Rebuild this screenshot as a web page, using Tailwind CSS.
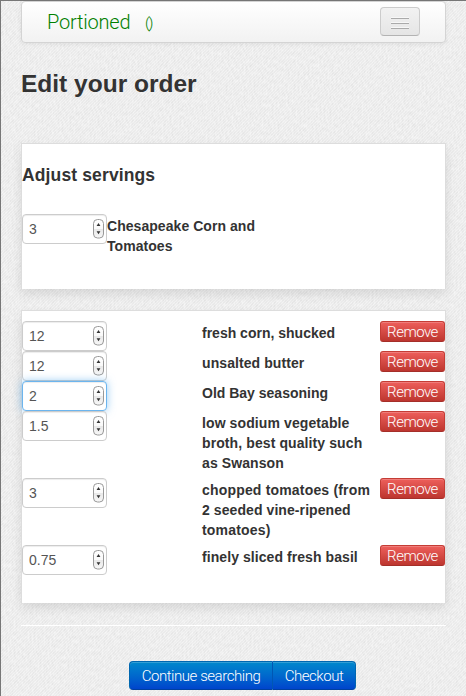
<!DOCTYPE html>
<html lang="en">
<head>
<meta charset="utf-8">
<title>Portioned</title>
<script src="https://cdn.jsdelivr.net/npm/@tailwindcss/browser@4"></script>
</head>
<body class="relative h-[696px] w-[466px] overflow-hidden bg-[#ededed] font-['Liberation_Sans',Arial,sans-serif] text-[14px] leading-[20px] text-[#333]">
<!-- linen background -->
<svg class="absolute inset-0 -z-0" width="466" height="696" aria-hidden="true">
  <filter id="linen" x="0" y="0" width="100%" height="100%" color-interpolation-filters="sRGB">
    <feTurbulence type="fractalNoise" baseFrequency="0.5 0.25" numOctaves="3" seed="4" stitchTiles="stitch"/>
    <feColorMatrix values="0.09 0 0 0 0.878  0.09 0 0 0 0.878  0.09 0 0 0 0.878  0 0 0 0 1"/>
  </filter>
  <pattern id="twill" width="3" height="3" patternUnits="userSpaceOnUse"><path d="M0 3L3 0" stroke="#fff" stroke-opacity=".4" stroke-width=".9"/></pattern>
  <rect width="466" height="696" filter="url(#linen)"/>
  <rect width="466" height="696" fill="url(#twill)"/>
</svg>
<svg width="0" height="0" class="absolute">
  <defs>
    <linearGradient id="sg" x1="0" y1="0" x2="0" y2="1"><stop offset="0" stop-color="#fff"/><stop offset=".5" stop-color="#fafafa"/><stop offset=".52" stop-color="#e8e8e8"/><stop offset="1" stop-color="#f8f8f8"/></linearGradient>
    <symbol id="spin" viewBox="0 0 11 20"><rect x=".5" y=".5" width="10" height="18.5" rx="4" fill="url(#sg)" stroke="#999"/><path d="M5.5 4L7.4 7H3.6ZM5.5 15.3L7.4 12.3H3.6Z" fill="#333"/></symbol>
  </defs>
</svg>
<div class="relative h-full border-t border-l border-[#777] pl-[20px]">
  <nav class="flex h-[42px] w-[425px] items-start justify-between rounded-[4px] border border-[#d4d4d4] bg-linear-to-b from-white to-[#f2f2f2] pr-[25px] pl-[25px] shadow-[0_1px_4px_rgba(0,0,0,0.065)]">
    <div class="flex pt-[9px] font-[Roboto] font-light text-[#008000]">
      <span class="w-[98px] pt-px text-[20px] tracking-[-0.2px] whitespace-nowrap">Portioned</span>
      <span class="pt-[2px] text-[15px] tracking-[-1.3px]">()</span>
    </div>
    <button class="mt-[5px] flex h-[29px] w-[40px] flex-col items-center gap-[3px] rounded-[4px] border border-[#ccc] border-b-[#b3b3b3] bg-linear-to-b from-[#f2f2f2] to-[#e5e5e5] pt-[9px] shadow-[inset_0_1px_0_rgba(255,255,255,0.1),0_1px_0_rgba(255,255,255,0.08)]" aria-label="Menu">
      <span class="h-[2px] w-[18px] border-b border-[#aaa] bg-[#f7f7f7]"></span>
      <span class="h-[2px] w-[18px] border-b border-[#aaa] bg-[#f7f7f7]"></span>
      <span class="h-[2px] w-[18px] border-b border-[#aaa] bg-[#f7f7f7]"></span>
    </button>
  </nav>
  <h2 class="mt-[21px] h-[79px] text-[24.5px] leading-[40px] font-bold whitespace-nowrap">Edit your order</h2>

  <section class="h-[146px] w-[425px] border border-b-0 border-[#ddd] bg-white shadow-[0_5px_10px_rgba(0,0,0,0.1)]">
    <h4 class="h-[70px] pt-[21px] text-[17.5px] font-bold tracking-[0.13px] whitespace-nowrap">Adjust servings</h4>
    <div class="flex">
      <div class="flex h-[30px] w-[85px] items-center justify-between rounded-[4px] border border-[#ccc] bg-white pr-[2px] pl-[6px] text-[#555] shadow-[inset_0_1px_1px_rgba(0,0,0,0.075)]"><span>3</span><svg class="h-[20px] w-[11px]"><use href="#spin"/></svg></div>
      <div class="pt-[2px] font-bold tracking-[0.05px] whitespace-nowrap">Chesapeake Corn and<br>Tomatoes</div>
    </div>
  </section>

  <section class="mt-[21px] h-[293px] w-[425px] border border-b-0 border-[#ddd] bg-white pt-[10px] shadow-[0_5px_10px_rgba(0,0,0,0.1)]">
    <div class="flex h-[30px] items-start">
      <div class="flex h-[30px] w-[85px] items-center justify-between rounded-[4px] border border-[#ccc] bg-white pr-[2px] pl-[6px] text-[#555] shadow-[inset_0_1px_1px_rgba(0,0,0,0.075)]"><span>12</span><svg class="h-[20px] w-[11px]"><use href="#spin"/></svg></div>
      <div class="ml-[95px] w-[178px] pt-[2px] font-bold whitespace-nowrap">fresh corn, shucked</div>
      <button class="h-[21px] w-[65px] rounded-[3px] border border-[#c43c35] border-b-[#a52f29] bg-linear-to-b from-[#ee5f5b] to-[#bd362f] pt-px font-[Roboto] text-[15px] leading-[18px] font-light tracking-[-0.5px] text-white shadow-[inset_0_1px_0_rgba(255,255,255,0.2)]">Remove</button>
    </div>
    <div class="flex h-[30px] items-start">
      <div class="flex h-[30px] w-[85px] items-center justify-between rounded-[4px] border border-[#ccc] bg-white pr-[2px] pl-[6px] text-[#555] shadow-[inset_0_1px_1px_rgba(0,0,0,0.075)]"><span>12</span><svg class="h-[20px] w-[11px]"><use href="#spin"/></svg></div>
      <div class="ml-[95px] w-[178px] pt-[2px] font-bold tracking-[0.08px] whitespace-nowrap">unsalted butter</div>
      <button class="h-[21px] w-[65px] rounded-[3px] border border-[#c43c35] border-b-[#a52f29] bg-linear-to-b from-[#ee5f5b] to-[#bd362f] pt-px font-[Roboto] text-[15px] leading-[18px] font-light tracking-[-0.5px] text-white shadow-[inset_0_1px_0_rgba(255,255,255,0.2)]">Remove</button>
    </div>
    <div class="flex h-[30px] items-start">
      <div class="flex h-[30px] w-[85px] items-center justify-between rounded-[4px] border border-[#6cb5ee] bg-white pr-[2px] pl-[6px] text-[#555] shadow-[inset_0_1px_1px_rgba(0,0,0,0.075),0_0_8px_rgba(82,168,236,0.6)]"><span>2</span><svg class="h-[20px] w-[11px]"><use href="#spin"/></svg></div>
      <div class="ml-[95px] w-[178px] pt-[2px] font-bold whitespace-nowrap">Old Bay seasoning</div>
      <button class="h-[21px] w-[65px] rounded-[3px] border border-[#c43c35] border-b-[#a52f29] bg-linear-to-b from-[#ee5f5b] to-[#bd362f] pt-px font-[Roboto] text-[15px] leading-[18px] font-light tracking-[-0.5px] text-white shadow-[inset_0_1px_0_rgba(255,255,255,0.2)]">Remove</button>
    </div>
    <div class="flex h-[67px] items-start">
      <div class="flex h-[30px] w-[85px] items-center justify-between rounded-[4px] border border-[#ccc] bg-white pr-[2px] pl-[6px] text-[#555] shadow-[inset_0_1px_1px_rgba(0,0,0,0.075)]"><span>1.5</span><svg class="h-[20px] w-[11px]"><use href="#spin"/></svg></div>
      <div class="ml-[95px] w-[178px] pt-[2px] font-bold tracking-[0.1px] whitespace-nowrap">low sodium vegetable<br>broth, best quality such<br>as Swanson</div>
      <button class="h-[21px] w-[65px] rounded-[3px] border border-[#c43c35] border-b-[#a52f29] bg-linear-to-b from-[#ee5f5b] to-[#bd362f] pt-px font-[Roboto] text-[15px] leading-[18px] font-light tracking-[-0.5px] text-white shadow-[inset_0_1px_0_rgba(255,255,255,0.2)]">Remove</button>
    </div>
    <div class="flex h-[67px] items-start">
      <div class="flex h-[30px] w-[85px] items-center justify-between rounded-[4px] border border-[#ccc] bg-white pr-[2px] pl-[6px] text-[#555] shadow-[inset_0_1px_1px_rgba(0,0,0,0.075)]"><span>3</span><svg class="h-[20px] w-[11px]"><use href="#spin"/></svg></div>
      <div class="ml-[95px] w-[178px] pt-[2px] font-bold tracking-[0.18px] whitespace-nowrap">chopped tomatoes (from<br><span class="tracking-[0.08px]">2 seeded vine-ripened</span><br>tomatoes)</div>
      <button class="h-[21px] w-[65px] rounded-[3px] border border-[#c43c35] border-b-[#a52f29] bg-linear-to-b from-[#ee5f5b] to-[#bd362f] pt-px font-[Roboto] text-[15px] leading-[18px] font-light tracking-[-0.5px] text-white shadow-[inset_0_1px_0_rgba(255,255,255,0.2)]">Remove</button>
    </div>
    <div class="flex h-[30px] items-start">
      <div class="flex h-[30px] w-[85px] items-center justify-between rounded-[4px] border border-[#ccc] bg-white pr-[2px] pl-[6px] text-[#555] shadow-[inset_0_1px_1px_rgba(0,0,0,0.075)]"><span>0.75</span><svg class="h-[20px] w-[11px]"><use href="#spin"/></svg></div>
      <div class="ml-[95px] w-[178px] pt-[2px] font-bold tracking-[0.07px] whitespace-nowrap">finely sliced fresh basil</div>
      <button class="h-[21px] w-[65px] rounded-[3px] border border-[#c43c35] border-b-[#a52f29] bg-linear-to-b from-[#ee5f5b] to-[#bd362f] pt-px font-[Roboto] text-[15px] leading-[18px] font-light tracking-[-0.5px] text-white shadow-[inset_0_1px_0_rgba(255,255,255,0.2)]">Remove</button>
    </div>
  </section>

  <hr class="mt-[22px] w-[425px] border-t border-white">
  <div class="mt-[35px] ml-[108px] flex font-[Roboto] text-[15px] font-light tracking-[-0.45px] text-white">
    <button class="h-[29px] w-[144px] rounded-l-[4px] border border-[#0067b0] border-r-[#0057b4] border-b-[#0040a0] bg-linear-to-b from-[#0088cc] to-[#0044cc] whitespace-nowrap shadow-[inset_0_1px_0_rgba(255,255,255,0.2)]">Continue searching</button>
    <button class="h-[29px] w-[83px] rounded-r-[4px] border border-l-0 border-[#0067b0] border-b-[#0040a0] bg-linear-to-b from-[#0088cc] to-[#0044cc] whitespace-nowrap shadow-[inset_0_1px_0_rgba(255,255,255,0.2)]">Checkout</button>
  </div>
</div>
</body>
</html>
